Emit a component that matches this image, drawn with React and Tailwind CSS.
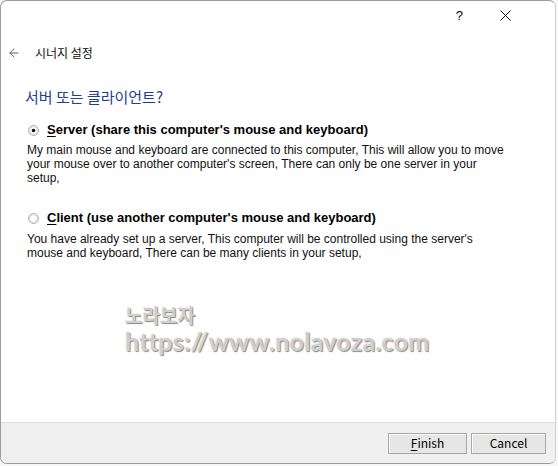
import React from "react";
import { ArrowLeft } from "lucide-react";

const ko = { fontFamily: '"Malgun Gothic", "Noto Sans CJK KR", "Noto Sans", sans-serif' };
const en = { fontFamily: '"Liberation Sans", "DejaVu Sans", Arial, sans-serif' };

function Radio({ checked }) {
  return (
    <svg width="11" height="11" viewBox="0 0 11 11" className="shrink-0">
      <circle cx="5.5" cy="5.5" r="4.8" fill="#fff" stroke="#9a9a9a" strokeWidth="1" />
      <circle cx="5.5" cy="5.5" r="3.9" fill="none" stroke="#dcdcdc" strokeWidth="0.8" />
      {checked && <circle cx="5.5" cy="5.5" r="1.8" fill="#111" />}
    </svg>
  );
}

function Option({ checked, hot, rest, children, labelMt, descMt }) {
  return (
    <div>
      <div className={`flex items-center h-[16px] ${labelMt}`}>
        <div className="w-[27px]" />
        <Radio checked={checked} />
        <div className="w-[8px]" />
        <span className="text-[13px] font-bold text-black" style={en}>
          <span className="underline underline-offset-2">{hot}</span>
          {rest}
        </span>
      </div>
      <p
        className={`${descMt} pl-[26px] pr-[48px] text-[12px] leading-[14px] text-[#111]`}
        style={en}
      >
        {children}
      </p>
    </div>
  );
}

export default function App() {
  return (
    <div className="w-[558px] h-[466px] bg-[#f7f7f7] overflow-hidden">
      <div className="w-[556px] h-[464px] bg-white border border-[#9c9c9c] border-r-[#d0d0d0] rounded-[7px] flex flex-col overflow-hidden">
        {/* title bar */}
        <div className="h-[29px] flex items-center justify-end">
          <span className="text-[13px] text-black mr-[37px]" style={en}>?</span>
          <svg width="11" height="11" viewBox="0 0 11 11" className="mr-[44px]">
            <path d="M0.5 0.5 L10.5 10.5 M10.5 0.5 L0.5 10.5" stroke="#111" strokeWidth="1" />
          </svg>
        </div>

        {/* header */}
        <div className="mt-[13px] h-[20px] flex items-center">
          <ArrowLeft size={14} strokeWidth={1.4} className="ml-[6px] text-[#444]" />
          <span className="ml-[14px] text-[12px] text-[#111]" style={ko}>시너지 설정</span>
        </div>

        {/* heading */}
        <h1 className="mt-[24px] ml-[24px] h-[20px] leading-[20px] text-[15px] text-[#1f3f8c]" style={ko}>
          서버 또는 클라이언트?
        </h1>

        <Option checked hot="S" rest="erver (share this computer's mouse and keyboard)" labelMt="mt-[15px]" descMt="mt-[5px]">
          My main mouse and keyboard are connected to this computer, This will allow you to move your mouse over to another computer's screen, There can only be one server in your setup,
        </Option>

        <Option hot="C" rest="lient (use another computer's mouse and keyboard)" labelMt="mt-[25px]" descMt="mt-[6px]">
          You have already set up a server, This computer will be controlled using the server's mouse and keyboard, There can be many clients in your setup,
        </Option>

        {/* watermark */}
        <div
          className="mt-[42px] ml-[124px] text-[#cfcfcf] font-bold [text-shadow:1px_1px_1px_#8a8a8a,-1px_-1px_0_#f2f2f2]"
          style={{ fontFamily: '"Noto Sans CJK KR", "Noto Sans", sans-serif' }}
        >
          <div className="text-[19px] leading-[26px]">노라보자</div>
          <div className="text-[25px] leading-[26px] tracking-[0.25px]" style={{ fontFamily: '"Lato", "Noto Sans", sans-serif' }}>
            https://www.nolavoza.com
          </div>
        </div>

        <div className="flex-1" />

        {/* footer */}
        <div className="h-[41px] bg-[#f0f0f0] border-t border-[#dfdfdf] flex items-center justify-end pr-[9px] gap-[4px]">
          <button
            className="w-[79px] h-[21px] bg-[#e6e6e6] border border-[#a8a8a8] shadow-[inset_1px_1px_0_#fafafa] text-[12px] text-black"
            style={ko}
          >
            <span className="underline underline-offset-2">F</span>inish
          </button>
          <button
            className="w-[75px] h-[21px] bg-[#e6e6e6] border border-[#a8a8a8] shadow-[inset_1px_1px_0_#fafafa] text-[12px] text-black"
            style={ko}
          >
            Cancel
          </button>
        </div>
      </div>
    </div>
  );
}
